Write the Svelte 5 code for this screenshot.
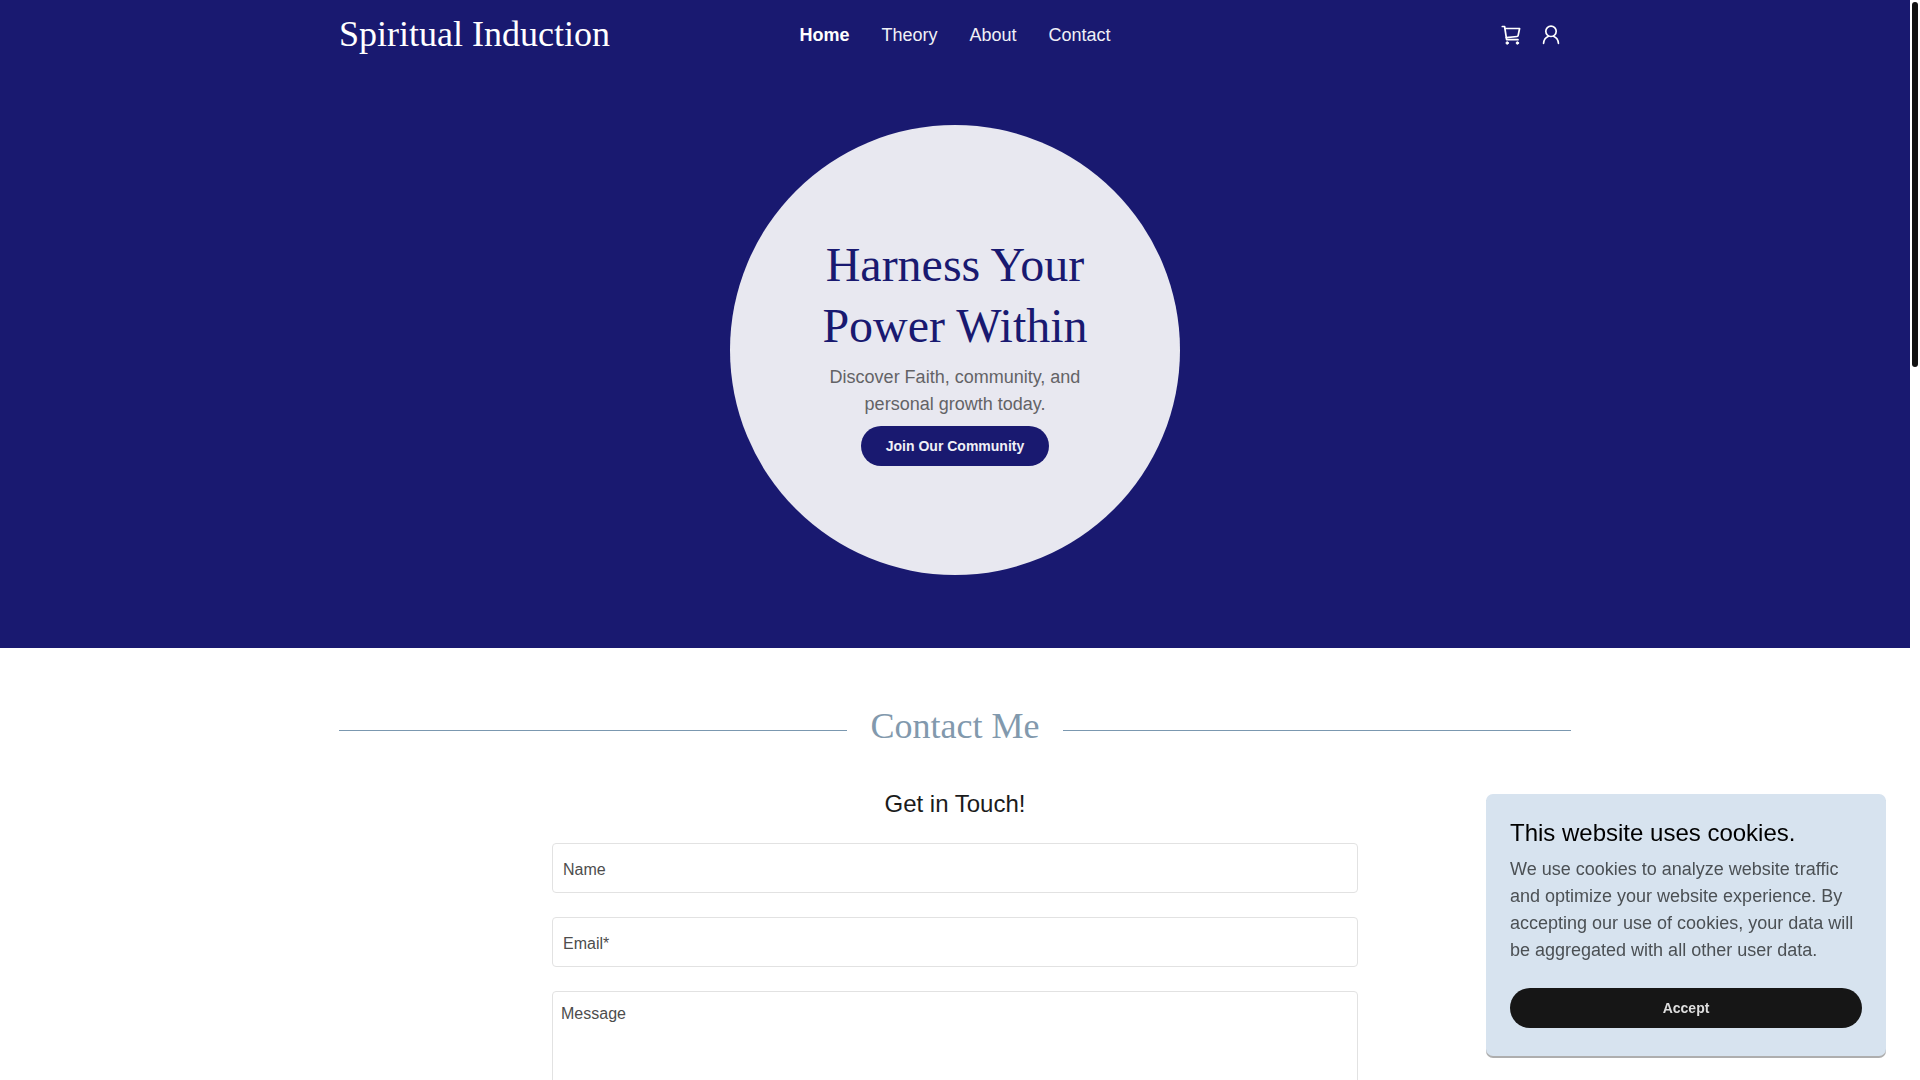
<script>
  const links = ['Home', 'Theory', 'About', 'Contact'];

  let current = $state('Home');
  let cookiesOpen = $state(true);
  let name = $state('');
  let email = $state('');
  let message = $state('');
</script>

<div class="viewport">
  <div class="page">
    <section class="hero">
      <header class="container topbar">
        <a class="brand" href="#home">Spiritual Induction</a>
        <nav aria-label="Main">
          {#each links as link}
            <a href={`#${link.toLowerCase()}`} class:active={current === link} onclick={() => (current = link)}>{link}</a>
          {/each}
        </nav>
        <div class="tools">
          <button class="icon-btn" type="button" aria-label="Shopping cart">
            <svg viewBox="0 0 24 24" width="24" height="24" fill="none" stroke="currentColor" stroke-width="1.7" stroke-linecap="round" stroke-linejoin="round">
              <path d="M3.300 3.500h2.300l2 13.200h11.400" />
              <path d="M6 5.500h14.600l-1.500 7.200c-.1.500-.4.800-.9.800l-10.900 1.100" />
              <circle cx="8.200" cy="20" r="1.200" fill="currentColor" stroke-width="1" />
              <circle cx="18.400" cy="20" r="1.200" fill="currentColor" stroke-width="1" />
            </svg>
          </button>
          <button class="icon-btn" type="button" aria-label="Account">
            <svg viewBox="0 0 24 24" width="24" height="24" fill="none" stroke="currentColor" stroke-width="1.7" stroke-linecap="round">
              <circle cx="12" cy="8.300" r="5.200" />
              <path d="M4.600 20.300c.3-3.600 2.200-6 5-7M19.400 20.300c-.3-3.600-2.200-6-5-7" />
            </svg>
          </button>
        </div>
      </header>

      <div class="circle">
        <h1>Harness Your Power Within</h1>
        <p>Discover Faith, community, and personal growth today.</p>
        <a class="pill" href="#contact">Join Our Community</a>
      </div>
    </section>

    <section class="container contact" id="contact">
      <h2><span>Contact Me</span></h2>
      <form onsubmit={(e) => e.preventDefault()}>
        <h3>Get in Touch!</h3>
        <input type="text" aria-label="Name" placeholder="Name" bind:value={name} />
        <input type="email" aria-label="Email" placeholder="Email*" bind:value={email} />
        <textarea aria-label="Message" placeholder="Message" rows="6" bind:value={message}></textarea>
      </form>
    </section>
  </div>

  <div class="scroll-track"><div class="scroll-thumb"></div></div>

  {#if cookiesOpen}
    <aside class="cookies" aria-label="Cookie notice">
      <h4>This website uses cookies.</h4>
      <p>We use cookies to analyze website traffic and optimize your website experience. By accepting our use of cookies, your data will be aggregated with all other user data.</p>
      <button class="pill dark" type="button" onclick={() => (cookiesOpen = false)}>Accept</button>
    </aside>
  {/if}
</div>

<style>
  :global(body) { background: #fff; }
  .viewport {
    display: flex;
    height: 100vh;
    overflow: hidden;
    font: 18px/27px "Liberation Sans", Arial, sans-serif;
  }
  .viewport * { box-sizing: border-box; }
  .page { flex: 1; min-width: 0; }
  .container { width: 100%; max-width: 1280px; margin: 0 auto; padding: 0 24px; }
  h1, h2, h3, h4, p { margin: 0; font-weight: 400; }
  a { text-decoration: none; }

  .hero { background: #191970; padding-bottom: 73px; }
  .topbar {
    display: grid;
    grid-template-columns: 1fr auto 1fr;
    align-items: center;
    height: 69px;
  }
  .brand { color: #fff; font: 36px/45px "Liberation Serif", "Times New Roman", serif; }
  nav { display: flex; gap: 32px; padding-top: 2px; }
  nav a { color: #f0f0f6; }
  nav a.active { color: #fff; font-weight: 700; }
  .tools { display: flex; justify-content: flex-end; gap: 16px; padding-right: 8px; }
  .icon-btn { display: flex; padding: 0; border: 0; background: none; color: #fff; cursor: pointer; }

  .circle {
    display: flex;
    flex-direction: column;
    align-items: center;
    justify-content: center;
    gap: 8px;
    width: 450px;
    aspect-ratio: 1;
    margin: 56px auto 0;
    padding: 0 80px;
    border-radius: 50%;
    background: #e8e8f0;
    text-align: center;
  }
  h1 { color: #191970; font: 48px/61px "Liberation Serif", "Times New Roman", serif; }
  .circle p { color: #636366; }
  .pill {
    display: block;
    height: 40px;
    padding: 0 25px;
    border: 0;
    border-radius: 20px;
    background: #191970;
    color: #f0f0f6;
    font: 700 14px/40px "Liberation Sans", Arial, sans-serif;
    text-align: center;
    cursor: pointer;
  }

  .contact { padding-top: 56px; }
  h2 {
    display: flex;
    align-items: center;
    gap: 24px;
    color: #8299ad;
    font: 36px/45px "Liberation Serif", "Times New Roman", serif;
  }
  h2::before, h2::after { content: ""; flex: 1; height: 1px; margin-top: 8px; background: #7b98b0; }
  form {
    display: flex;
    flex-direction: column;
    gap: 24px;
    max-width: 806px;
    margin: 40px auto 0;
  }
  h3 { color: #1b1b1b; font-size: 24px; line-height: 30px; text-align: center; }
  input, textarea {
    width: 100%;
    border: 1px solid #e2e2e2;
    border-radius: 4px;
    background: #fff;
    color: #1b1b1b;
    font: 16px/24px "Liberation Sans", Arial, sans-serif;
  }
  input { height: 50px; padding: 4px 10px 0; }
  textarea { display: block; padding: 10px 8px; resize: none; }
  input::placeholder, textarea::placeholder { color: #4d4d4d; opacity: 1; }

  .scroll-track { flex: none; width: 10px; padding: 2px; background: #fff; }
  .scroll-thumb { height: 34%; max-height: 365px; border-radius: 3px; background: #111; }

  .cookies {
    position: fixed;
    right: 34px;
    bottom: 24px;
    width: 400px;
    padding: 24px 24px 28px;
    border-radius: 7px;
    background: #d7e3ef;
    box-shadow: 0 2px 0 #aeaeae;
  }
  h4 { color: #000; font-size: 24px; line-height: 30px; }
  .cookies p { margin: 8px 0 24px; color: #4b5054; }
  .pill.dark { width: 100%; background: #161616; color: #dedede; }
</style>
